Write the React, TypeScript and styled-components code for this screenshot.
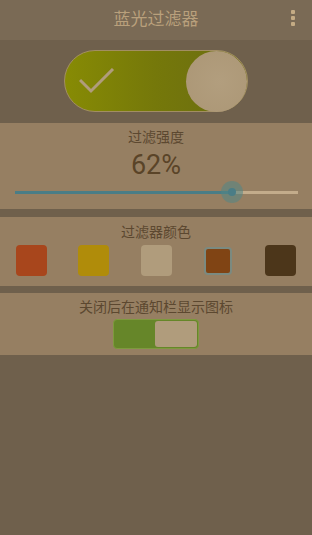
import React, { useState } from 'react';
import styled, { createGlobalStyle } from 'styled-components';

const GlobalStyle = createGlobalStyle`
  html, body {
    margin: 0;
    padding: 0;
    background: #6f604c;
  }
  body {
    font-family: "Noto Sans CJK SC", "Noto Sans", Roboto, sans-serif;
  }
`;

const Page = styled.div`
  width: 312px;
  min-height: 535px;
  background: #6f604c;
  display: flex;
  flex-direction: column;
`;

const Header = styled.div`
  height: 40px;
  background: #7a6a55;
  display: flex;
  align-items: center;
  justify-content: center;
  position: relative;
`;

const Title = styled.div`
  color: #b9a07c;
  font-size: 17px;
  line-height: 20px;
  margin-top: -4px;
`;

const MenuDots = styled.div`
  position: absolute;
  right: 17px;
  top: 10px;
  display: flex;
  flex-direction: column;
  gap: 2px;
`;

const Dot = styled.span`
  width: 4px;
  height: 4px;
  background: #c4ab84;
  border-radius: 1px;
`;

const Hero = styled.div`
  height: 83px;
  display: flex;
  justify-content: center;
  padding-top: 10px;
  box-sizing: border-box;
`;

const BigToggle = styled.div`
  width: 184px;
  height: 62px;
  box-sizing: border-box;
  border-radius: 31px;
  border: 1px solid #a28e62;
  background: linear-gradient(90deg, #878b04 0%, #75780a 50%, #6a6c12 100%);
  display: flex;
  align-items: center;
  justify-content: space-between;
  padding-left: 14px;
`;

const Knob = styled.div`
  width: 61px;
  height: 61px;
  border-radius: 50%;
  background: radial-gradient(circle at 55% 50%, #b29e7e 0%, #ab9675 100%);
`;

const Card = styled.div<{ $h: number; $mt: number; $pt: number }>`
  height: ${p => p.$h}px;
  margin-top: ${p => p.$mt}px;
  padding-top: ${p => p.$pt}px;
  background: #967f62;
  display: flex;
  flex-direction: column;
  align-items: center;
  box-sizing: border-box;
`;

const Label = styled.div`
  color: #5c4830;
  font-size: 14px;
  line-height: 20px;
`;

const Percent = styled.div`
  color: #5a4428;
  font-family: Roboto, "Noto Sans", sans-serif;
  font-size: 27px;
  line-height: 30px;
  margin-top: 4px;
`;

const SliderWrap = styled.div`
  width: 283px;
  height: 24px;
  position: relative;
  display: flex;
  align-items: center;
`;

const TrackFill = styled.div`
  height: 3px;
  background: #4a7d86;
`;

const TrackRest = styled.div`
  height: 3px;
  flex: 1;
  background: #c3ac8b;
`;

const Thumb = styled.div`
  position: absolute;
  top: 1px;
  width: 22px;
  height: 22px;
  margin-left: -11px;
  border-radius: 50%;
  background: rgba(82, 135, 135, 0.55);
  display: flex;
  align-items: center;
  justify-content: center;
  &::after {
    content: '';
    width: 8px;
    height: 8px;
    border-radius: 50%;
    background: #4a7d86;
  }
`;

const Swatches = styled.div`
  width: 100%;
  box-sizing: border-box;
  padding: 0 16px;
  margin-top: 4px;
  display: flex;
  justify-content: space-between;
`;

const Swatch = styled.div<{ $c: string; $sel: boolean }>`
  width: 31px;
  height: 31px;
  display: flex;
  align-items: center;
  justify-content: center;
  &::after {
    content: '';
    box-sizing: border-box;
    width: ${p => (p.$sel ? 28 : 31)}px;
    height: ${p => (p.$sel ? 28 : 31)}px;
    border-radius: 4px;
    background: ${p => p.$c};
    border: ${p => (p.$sel ? '2px solid #7b8a80' : 'none')};
  }
`;

const SmallSwitch = styled.div`
  margin-top: 3px;
  width: 86px;
  height: 30px;
  box-sizing: border-box;
  border: 1px solid #7e9a3e;
  border-radius: 4px;
  background: #668629;
  display: flex;
  justify-content: flex-end;
  padding: 1px;
`;

const SmallKnob = styled.div`
  width: 42px;
  border-radius: 3px;
  background: #b09c7c;
`;

const colors = ['#a8461c', '#b08c0a', '#b09c7c', '#804414', '#4c361a'];

const App: React.FC = () => {
  const [selected, setSelected] = useState(3);
  const value = 0.77;

  return (
    <Page>
      <GlobalStyle />
      <Header>
        <Title>蓝光过滤器</Title>
        <MenuDots>
          <Dot />
          <Dot />
          <Dot />
        </MenuDots>
      </Header>
      <Hero>
        <BigToggle>
          <svg width="36" height="26" viewBox="0 0 36 26">
            <polyline points="1,12 12,23 34,1" fill="none" stroke="#b09c7c" strokeWidth="3" />
          </svg>
          <Knob />
        </BigToggle>
      </Hero>
      <Card $h={86} $mt={0} $pt={3}>
        <Label>过滤强度</Label>
        <Percent>62%</Percent>
        <SliderWrap>
          <TrackFill style={{ width: `${value * 100}%` }} />
          <TrackRest />
          <Thumb style={{ left: `${value * 100}%` }} />
        </SliderWrap>
      </Card>
      <Card $h={69} $mt={8} $pt={4}>
        <Label>过滤器颜色</Label>
        <Swatches>
          {colors.map((c, i) => (
            <Swatch key={c} $c={c} $sel={i === selected} onClick={() => setSelected(i)} />
          ))}
        </Swatches>
      </Card>
      <Card $h={62} $mt={7} $pt={3}>
        <Label>关闭后在通知栏显示图标</Label>
        <SmallSwitch>
          <SmallKnob />
        </SmallSwitch>
      </Card>
    </Page>
  );
};

export default App;
